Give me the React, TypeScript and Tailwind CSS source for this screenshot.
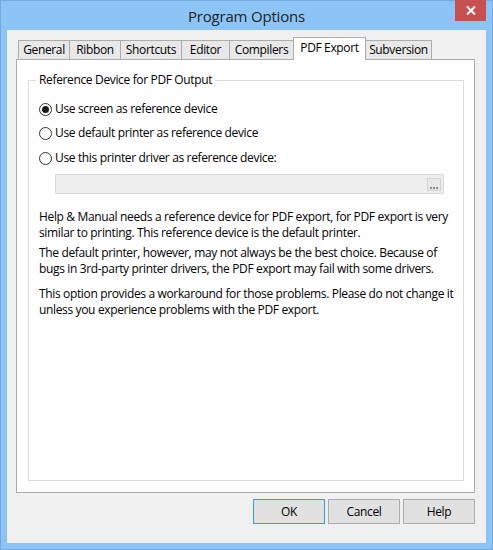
import React from "react";

const font = { fontFamily: '"Segoe UI", "Open Sans", "Noto Sans", sans-serif' };

const tabs = ["General", "Ribbon", "Shortcuts", "Editor", "Compilers", "PDF Export", "Subversion"];
const tabWidths: Record<string, string> = {
  General: "w-[52px]",
  Ribbon: "w-[52px]",
  Shortcuts: "w-[62px]",
  Editor: "w-[49px]",
  Compilers: "w-[65px]",
  "PDF Export": "w-[73px]",
  Subversion: "w-[67px]",
};

function Radio({ checked, label }: { checked?: boolean; label: string }) {
  return (
    <div className="flex items-center gap-[3px]">
      <span className="flex h-[13px] w-[13px] items-center justify-center rounded-full border border-[#333] bg-white">
        {checked && <span className="h-[7px] w-[7px] rounded-full bg-[#1a1a1a]" />}
      </span>
      <span>{label}</span>
    </div>
  );
}

function Button({ label, primary }: { label: string; primary?: boolean }) {
  return (
    <div
      className={
        "flex h-[25px] w-[72px] items-center justify-center border bg-[#e1e1e1] " +
        (primary ? "border-[#3399ff]" : "border-[#adadad]")
      }
    >
      {label}
    </div>
  );
}

export default function App() {
  return (
    <div
      className="flex h-[550px] w-[493px] flex-col border border-[#72a9de] bg-[#8cc4f6] text-[12px] tracking-[-0.35px] text-black"
      style={font}
    >
      {/* title bar */}
      <div className="relative flex h-[29px] shrink-0 items-center justify-center">
        <span className="pt-[1px] text-[15px] tracking-[-0.2px] text-[#222]">Program Options</span>
        <div className="absolute right-[6px] top-[-1px] flex h-[21px] w-[31px] items-center justify-center bg-[#c75050]">
          <svg width="10" height="9" viewBox="0 0 10 9">
            <path d="M1 0.5 L9 8.5 M9 0.5 L1 8.5" stroke="white" strokeWidth="2" />
          </svg>
        </div>
      </div>

      {/* client */}
      <div className="mx-[6px] flex h-[513px] flex-col bg-[#f0f0f0] pl-[9px] pt-[7px]">
        <div className="ml-[2px] flex h-[22px] items-end">
          {tabs.map((t) =>
            t === "PDF Export" ? (
              <div
                key={t}
                className={`relative z-10 -mb-px -ml-px flex h-[23px] items-center justify-center whitespace-nowrap border border-b-0 border-[#acacac] bg-white pb-[2px] ${tabWidths[t]}`}
              >
                {t}
              </div>
            ) : (
              <div
                key={t}
                className={`-ml-px flex h-[19px] items-center justify-center whitespace-nowrap border border-b-0 border-[#acacac] bg-[#e8e8e8] first:ml-0 ${tabWidths[t]}`}
              >
                {t}
              </div>
            )
          )}
        </div>

        {/* panel */}
        <div className="flex h-[434px] w-[459px] flex-col border border-[#acacac] bg-white pb-[11px] pl-[11px] pr-[10px] pt-[20px]">
          <div className="relative flex flex-1 flex-col border border-[#dcdcdc] pl-[10px] pt-[20px]">
            <span className="absolute left-[7px] top-[-9px] bg-white px-[3px] leading-[16px]">
              Reference Device for PDF Output
            </span>
            <div className="flex flex-col gap-[8px] leading-[16px]">
              <Radio checked label="Use screen as reference device" />
              <Radio label="Use default printer as reference device" />
              <div className="mt-[1px]">
                <Radio label="Use this printer driver as reference device:" />
              </div>
            </div>
            <div className="ml-[16px] mt-[8px] flex h-[20px] w-[389px] items-center justify-end border border-[#d9d9d9] bg-[#eeeeee] pr-[2px]">
              <div className="flex h-[13px] w-[14px] items-end justify-center border border-[#d4d4d4] bg-[#e8e8e8] pb-[1px]">
                <span className="flex gap-[1px]">
                  <span className="h-[2px] w-[2px] bg-[#8a8a8a]" />
                  <span className="h-[2px] w-[2px] bg-[#8a8a8a]" />
                  <span className="h-[2px] w-[2px] bg-[#8a8a8a]" />
                </span>
              </div>
            </div>

            <div className="mt-[15px] flex flex-col whitespace-nowrap leading-[16px]">
              <p>
                Help &amp; Manual needs a reference device for PDF export, for PDF export is very
                <br />
                similar to printing. This reference device is the default printer.
              </p>
              <p className="mt-[4px]">
                The default printer, however, may not always be the best choice. Because of
                <br />
                bugs in 3rd-party printer drivers, the PDF export may fail with some drivers.
              </p>
              <p className="mt-[9px]">
                This option provides a workaround for those problems. Please do not change it
                <br />
                unless you experience problems with the PDF export.
              </p>
            </div>
          </div>
        </div>

        {/* buttons */}
        <div className="mt-[6px] flex w-[459px] justify-end gap-[3px]">
          <Button primary label="OK" />
          <Button label="Cancel" />
          <Button label="Help" />
        </div>
      </div>
    </div>
  );
}
